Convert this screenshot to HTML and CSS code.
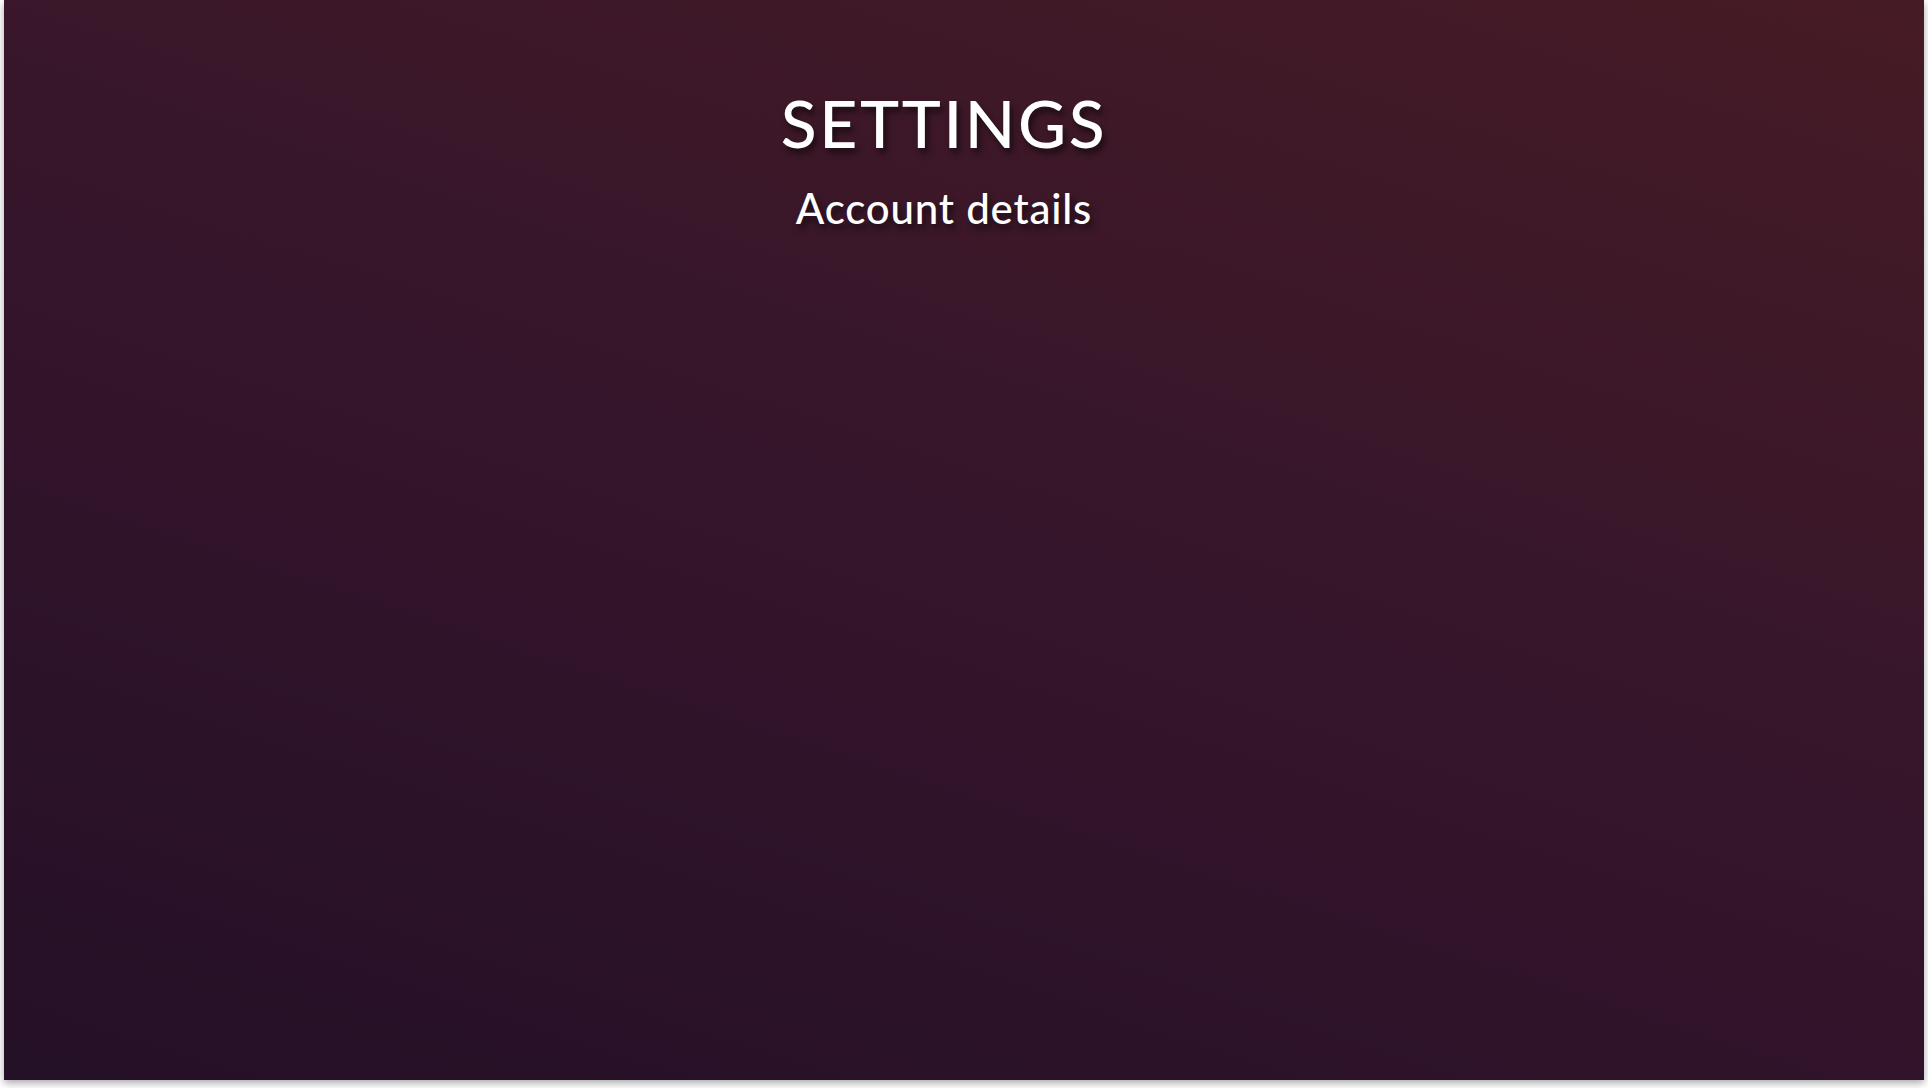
FILE: index.html
```html
<!DOCTYPE html>
<html lang="en">
<head>
<meta charset="utf-8">
<title>Settings</title>
<link rel="stylesheet" href="styles.css">
</head>
<body>
<main class="screen">
  <header class="header">
    <h1 class="title">SETTINGS</h1>
    <h2 class="subtitle">Account details</h2>
  </header>
</main>
</body>
</html>
```
FILE: styles.css
```css
html, body {
  margin: 0;
  padding: 0;
  background: #ffffff;
}
body {
  width: 1928px;
  height: 1088px;
  overflow: hidden;
}
.screen {
  width: 1920px;
  height: 1080px;
  margin: 0 auto;
  background: linear-gradient(18deg, #241027 0%, #35152b 50%, #461b25 100%);
  box-shadow: 0 3px 8px rgba(0, 0, 0, 0.35);
  font-family: "Lato", "Noto Sans", sans-serif;
  color: #ffffff;
}
.header {
  display: flex;
  flex-direction: column;
  align-items: center;
  padding-top: 85px;
  padding-right: 40px;
}
.title {
  margin: 0;
  font-size: 66px;
  font-weight: 500;
  letter-spacing: 2.6px;
  line-height: 76px;
  text-shadow: 3px 5px 6px rgba(0, 0, 0, 0.55);
}
.subtitle {
  margin: 22px 0 0;
  font-size: 42px;
  font-weight: 500;
  letter-spacing: 0.8px;
  line-height: 50px;
  text-shadow: 3px 5px 6px rgba(0, 0, 0, 0.55);
}
```
